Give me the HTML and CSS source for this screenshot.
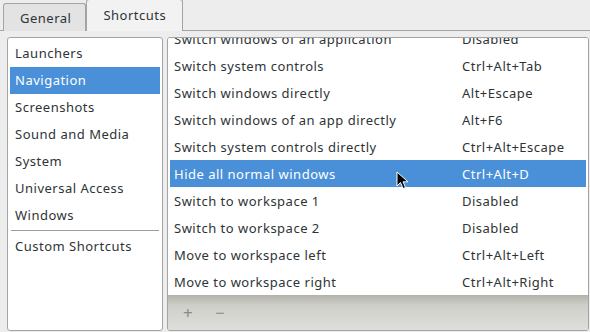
FILE: index.html
```html
<!DOCTYPE html>
<html lang="en">
<head>
    <meta charset="UTF-8">
    <title>Keyboard Shortcuts</title>
    <link rel="stylesheet" href="styles.css">
</head>
<body>
    <div class="window">
        <div class="tabs">
            <div class="tab">General</div>
            <div class="tab active">Shortcuts</div>
        </div>
        <div class="page">
            <div class="sections">
                <div class="section">Launchers</div>
                <div class="section selected">Navigation</div>
                <div class="section">Screenshots</div>
                <div class="section">Sound and Media</div>
                <div class="section">System</div>
                <div class="section">Universal Access</div>
                <div class="section">Windows</div>
                <div class="separator"></div>
                <div class="section">Custom Shortcuts</div>
            </div>
            <div class="shortcuts">
                <div class="list">
                    <div class="row first"><span class="name">Switch windows of an application</span><span class="accel">Disabled</span></div>
                    <div class="row"><span class="name">Switch system controls</span><span class="accel">Ctrl+Alt+Tab</span></div>
                    <div class="row"><span class="name">Switch windows directly</span><span class="accel">Alt+Escape</span></div>
                    <div class="row"><span class="name">Switch windows of an app directly</span><span class="accel">Alt+F6</span></div>
                    <div class="row"><span class="name">Switch system controls directly</span><span class="accel">Ctrl+Alt+Escape</span></div>
                    <div class="row selected"><span class="name">Hide all normal windows</span><span class="accel">Ctrl+Alt+D</span></div>
                    <div class="row"><span class="name">Switch to workspace 1</span><span class="accel">Disabled</span></div>
                    <div class="row"><span class="name">Switch to workspace 2</span><span class="accel">Disabled</span></div>
                    <div class="row"><span class="name">Move to workspace left</span><span class="accel">Ctrl+Alt+Left</span></div>
                    <div class="row"><span class="name">Move to workspace right</span><span class="accel">Ctrl+Alt+Right</span></div>
                </div>
                <div class="toolbar">
                    <span class="tool">+</span>
                    <span class="tool">&minus;</span>
                </div>
            </div>
        </div>

        <!-- mouse pointer over the selected row -->
        <svg class="pointer" width="14" height="20" viewBox="0 0 14 20">
            <path d="M1 1 L1 15 L4.5 11.5 L7 17.5 L9.5 16.5 L7 10.8 L12 10.8 Z" fill="#000" stroke="#fff" stroke-width="1" stroke-linejoin="round"></path>
        </svg>
    </div>
</body>
</html>
```

FILE: styles.css
```css
:root {
    --bg: #ededed;
    --border: #a4a4a4;
    --text: #2e3436;
    --selected: #4a90d9;
}

* {
    margin: 0;
    padding: 0;
    box-sizing: border-box;
}

body {
    font-family: "Noto Sans", "Open Sans", sans-serif;
    font-size: 13px;
    letter-spacing: 0.5px;
    color: var(--text);
    background: var(--bg);
    width: 590px;
    height: 332px;
    overflow: hidden;
}

.window {
    position: relative;
    height: 332px;
    display: flex;
    flex-direction: column;
}

.tabs {
    height: 31px;
    display: flex;
    align-items: flex-end;
    padding-left: 3px;
    border-bottom: 1px solid var(--border);
}

.tab {
    height: 28px;
    margin-bottom: -1px;
    padding: 0 14px 0 16px;
    display: flex;
    align-items: center;
    background: #e3e3e3;
    border: 1px solid var(--border);
    border-bottom: none;
    border-radius: 3px 3px 0 0;
}

.tab.active {
    height: 32px;
    padding: 0 16px 2px 16px;
    background: #f2f2f2;
    border-top: 1px solid var(--selected);
    border-left-color: var(--border);
}

.page {
    flex: 1;
    display: flex;
    gap: 4px;
    padding: 6px 0 1px 7px;
}

.sections {
    width: 156px;
    background: #fff;
    border: 1px solid var(--border);
    border-radius: 3px;
    padding: 2px;
}

.section {
    height: 27px;
    line-height: 27px;
    padding-left: 5px;
}

.section.selected,
.row.selected {
    background: var(--selected);
    color: #fff;
}

.separator {
    height: 1px;
    margin: 1px 1px 2px 1px;
    background: #9c9c9c;
}

.shortcuts {
    flex: 1;
    margin-right: 1px;
    display: flex;
    flex-direction: column;
    border: 1px solid var(--border);
    border-radius: 3px;
    overflow: hidden;
}

.list {
    height: 257px;
    background: #fff;
    padding: 0 2px;
    overflow: hidden;
}

.row {
    height: 27px;
    display: flex;
    align-items: center;
    padding-left: 4px;
}

.row.first {
    margin-top: -13px;
}

.name {
    width: 288px;
}

.toolbar {
    flex: 1;
    display: flex;
    align-items: center;
    gap: 20px;
    padding-left: 14px;
    background: linear-gradient(#b2b2aa, #cfcfca 30%, #dededb);
    color: #8a8a86;
    font-size: 17px;
}

.tool {
    width: 12px;
    text-align: center;
}

.pointer {
    position: absolute;
    left: 396px;
    top: 171px;
}
```
